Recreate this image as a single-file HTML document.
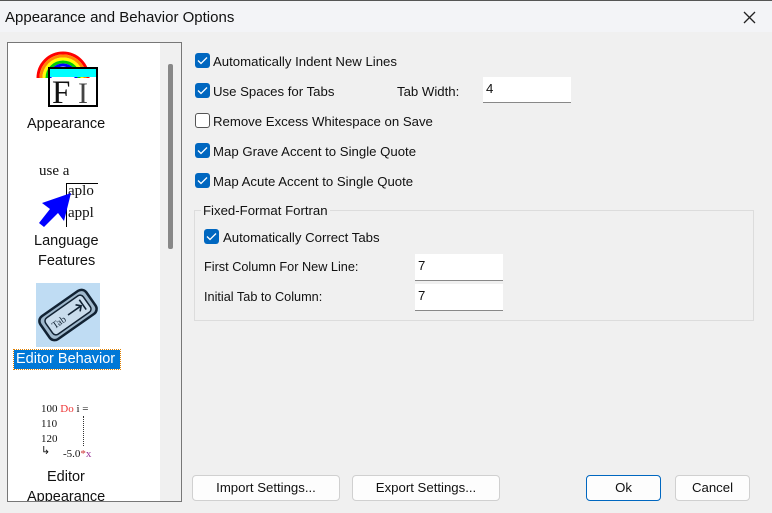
<!DOCTYPE html>
<html><head><meta charset="utf-8"><style>
*{margin:0;padding:0;box-sizing:border-box}
body{width:772px;height:513px;background:#f0f0f0;font-family:"Liberation Sans",sans-serif;font-size:13.2px;color:#111;position:relative;overflow:hidden}
.abs{position:absolute}
.title{left:0;top:0;width:772px;height:32px;background:#f3f4f7;border-top:1px solid #555}
.cb{position:absolute;width:15px;height:15px;border-radius:3px;background:#0067c0}
.cb svg{position:absolute;left:2px;top:3px}
.cb.off{background:#fff;border:1px solid #555}
.lbl{position:absolute;white-space:nowrap}
.inp{position:absolute;background:#fff;border-bottom:1px solid #888;padding:4px 0 0 3px}
.btn{position:absolute;height:26px;background:#fdfdfd;border:1px solid #d0d0d0;border-radius:4px;text-align:center;line-height:24px}
.serif{font-family:"Liberation Serif",serif}
.pl{font-size:14.5px}
</style></head><body>
<div class="abs title"><div class="lbl" style="left:5px;top:8px;font-size:15px">Appearance and Behavior Options</div>
<svg class="abs" style="left:743px;top:10px" width="13" height="13"><path d="M1 1L12 12M12 1L1 12" stroke="#222" stroke-width="1.3"/></svg></div>

<div class="abs" style="left:7px;top:42px;width:175px;height:460px;border:1px solid #777;background:#fff">
 <div class="abs" style="left:152px;top:0;width:21px;height:458px;background:#f0f0f0"></div>
 <div class="abs" style="left:160px;top:21px;width:5px;height:185px;background:#888;border-radius:2px"></div>
 <!-- appearance icon -->
 <svg class="abs" style="left:0;top:0" width="152" height="70">
  <path d="M30 35A25 25 0 0 1 80 35" stroke="#f00" stroke-width="3" fill="none"/>
  <path d="M33 35A22 22 0 0 1 77 35" stroke="#f80" stroke-width="3" fill="none"/>
  <path d="M36 35A19 19 0 0 1 74 35" stroke="#ff0" stroke-width="3" fill="none"/>
  <path d="M39 35A16 16 0 0 1 71 35" stroke="#0c0" stroke-width="3" fill="none"/>
  <path d="M42 35A13 13 0 0 1 68 35" stroke="#00f" stroke-width="3" fill="none"/>
  <rect x="41" y="25" width="48" height="9" fill="#0ff"/>
  <rect x="41" y="25" width="48" height="38" fill="none" stroke="#000" stroke-width="2"/>
  <text x="44" y="60" font-family="Liberation Serif" font-size="33" fill="#111">F</text>
  <text x="70" y="60" font-family="Liberation Serif" font-size="30" fill="#444">I</text>
 </svg>
 <div class="lbl pl" style="left:19px;top:73px">Appearance</div>
 <!-- language -->
 <div class="lbl serif" style="left:31px;top:120px;font-size:15px">use a</div>
 <div class="abs" style="left:58px;top:140px;width:1px;height:44px;background:#000"></div>
 <div class="abs" style="left:58px;top:140px;width:32px;height:1px;background:#000"></div>
 <div class="lbl serif" style="left:60px;top:140px;font-size:15px">aplo</div>
 <div class="lbl serif" style="left:60px;top:162px;font-size:15px">appl</div>
 <svg class="abs" style="left:28px;top:148px" width="40" height="38"><path d="M3 32L8 36L22 22L28 30L35 2L6 12L14 18Z" fill="#00f"/></svg>
 <div class="lbl pl" style="left:26px;top:190px">Language</div>
 <div class="lbl pl" style="left:30px;top:210px">Features</div>
 <!-- editor behavior -->
 <div class="abs" style="left:28px;top:240px;width:64px;height:64px;background:#bfdcf3"></div>
 <svg class="abs" style="left:28px;top:240px" width="64" height="64">
  <g transform="rotate(-35 32 32)"><rect x="4" y="18" width="56" height="28" rx="6" fill="#9fb8cc" stroke="#123" stroke-width="2.5"/><rect x="9" y="22" width="46" height="20" rx="4" fill="#c9dcec" stroke="#123" stroke-width="1.5"/>
  <text x="13" y="36" font-family="Liberation Serif" font-size="10" fill="#123">Tab</text>
  <path d="M32 32H48M44 28L48 32L44 36M50 26V38" stroke="#123" stroke-width="1.6" fill="none"/></g>
 </svg>
 <div class="lbl" style="left:6px;top:307px;width:106px;height:19px;background:#0078d7;color:#fff;font-size:14.5px;padding:1px 2px;outline:1px dotted #e08000">Editor Behavior</div>
 <!-- editor appearance -->
 <div class="lbl serif" style="left:33px;top:360px;font-size:11px">100 <span style="color:#e33">Do</span> i =</div>
 <div class="lbl serif" style="left:33px;top:375px;font-size:11px">110</div>
 <div class="lbl serif" style="left:33px;top:390px;font-size:11px">120</div>
 <div class="abs" style="left:75px;top:373px;height:30px;border-left:1px dotted #333"></div>
 <div class="lbl" style="left:33px;top:401px;font-size:11px">↳</div>
 <div class="lbl serif" style="left:55px;top:405px;font-size:11px">-5.0<span style="color:#c33">*</span><span style="color:#939">x</span></div>
 <div class="lbl pl" style="left:39px;top:426px">Editor</div>
 <div class="lbl pl" style="left:19px;top:446px;height:12px;overflow:hidden">Appearance</div>
</div>

<!-- options -->
<div class="cb" style="left:195px;top:53px"><svg width="11" height="9"><path d="M1 4.5L4 7.5L10 1.5" stroke="#fff" stroke-width="1.3" fill="none"/></svg></div>
<div class="lbl" style="left:213px;top:54px">Automatically Indent New Lines</div>
<div class="cb" style="left:195px;top:83px"><svg width="11" height="9"><path d="M1 4.5L4 7.5L10 1.5" stroke="#fff" stroke-width="1.3" fill="none"/></svg></div>
<div class="lbl" style="left:213px;top:84px">Use Spaces for Tabs</div>
<div class="lbl" style="left:397px;top:84px">Tab Width:</div>
<div class="inp" style="left:483px;top:77px;width:88px;height:26px">4</div>
<div class="cb off" style="left:195px;top:113px"></div>
<div class="lbl" style="left:213px;top:114px">Remove Excess Whitespace on Save</div>
<div class="cb" style="left:195px;top:143px"><svg width="11" height="9"><path d="M1 4.5L4 7.5L10 1.5" stroke="#fff" stroke-width="1.3" fill="none"/></svg></div>
<div class="lbl" style="left:213px;top:144px">Map Grave Accent to Single Quote</div>
<div class="cb" style="left:195px;top:173px"><svg width="11" height="9"><path d="M1 4.5L4 7.5L10 1.5" stroke="#fff" stroke-width="1.3" fill="none"/></svg></div>
<div class="lbl" style="left:213px;top:174px">Map Acute Accent to Single Quote</div>

<div class="abs" style="left:194px;top:210px;width:560px;height:111px;border:1px solid #dcdcdc"></div>
<div class="lbl" style="left:201px;top:203px;background:#f0f0f0;padding:0 2px">Fixed-Format Fortran</div>
<div class="cb" style="left:204px;top:229px"><svg width="11" height="9"><path d="M1 4.5L4 7.5L10 1.5" stroke="#fff" stroke-width="1.3" fill="none"/></svg></div>
<div class="lbl" style="left:223px;top:230px">Automatically Correct Tabs</div>
<div class="lbl" style="left:204px;top:260px;font-size:12.7px">First Column For New Line:</div>
<div class="inp" style="left:415px;top:254px;width:88px;height:27px">7</div>
<div class="lbl" style="left:204px;top:290px;font-size:12.7px">Initial Tab to Column:</div>
<div class="inp" style="left:415px;top:284px;width:88px;height:27px">7</div>

<div class="btn" style="left:192px;top:475px;width:148px">Import Settings...</div>
<div class="btn" style="left:352px;top:475px;width:148px">Export Settings...</div>
<div class="btn" style="left:586px;top:475px;width:75px;border-color:#0067c0">Ok</div>
<div class="btn" style="left:675px;top:475px;width:75px">Cancel</div>
</body></html>
